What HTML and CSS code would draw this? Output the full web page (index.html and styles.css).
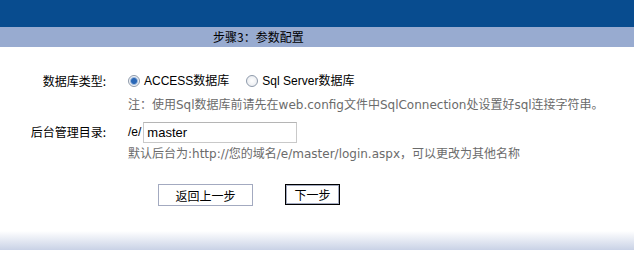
FILE: index.html
```html
<!DOCTYPE html>
<html lang="zh-CN">
<head>
    <meta charset="UTF-8">
    <title>安装向导 - 步骤3</title>
    <link rel="stylesheet" href="styles.css">
</head>
<body>
<div class="top"></div>
<div class="step">步骤3：参数配置</div>
<form class="setup" onsubmit="return false;">
    <div class="row">
        <div class="label">数据库类型:</div>
        <div class="field">
            <div class="choice">
                <label><input type="radio" name="dbtype" value="access" checked>ACCESS数据库</label>
                <label><input type="radio" name="dbtype" value="sql">Sql Server数据库</label>
            </div>
            <div class="note">注：使用Sql数据库前请先在web.config文件中SqlConnection处设置好sql连接字符串。</div>
        </div>
    </div>
    <div class="row">
        <div class="label label-mid">后台管理目录:</div>
        <div class="field">
            <div class="path">/e/<input type="text" name="admin_dir" value="master"></div>
            <div class="note">默认后台为:http://您的域名/e/master/login.aspx，可以更改为其他名称</div>
        </div>
    </div>
    <div class="actions">
        <button type="button" class="btn btn-back">返回上一步</button>
        <button type="submit" class="btn btn-next">下一步</button>
    </div>
</form>
<div class="bottom"></div>
</body>
</html>
```
FILE: styles.css
```css
body {
    margin: 0; background: #fff; color: #000;
    font-family: "DejaVu Sans", "Noto Sans CJK SC", sans-serif; font-size: 12px;
}
.top { height: 27px; background: #084c8f; }
.step {
    height: 20px; line-height: 20px; background: #98abd0; padding-left: 213px;
    font-family: "Noto Sans CJK SC", sans-serif; font-size: 12px;
}
.setup { padding-top: 24px; }
.row { display: grid; grid-template-columns: 106px 1fr; column-gap: 22px; margin-bottom: 8px; }
.label { text-align: right; line-height: 20px; font-family: "Noto Sans CJK SC", sans-serif; font-size: 12px; }
.label-mid { line-height: 22px; }
.choice {
    line-height: 20px; display: flex; gap: 17px;
    font-family: "Liberation Sans", "Noto Sans CJK SC", sans-serif; font-size: 12px;
}
.choice label { display: flex; align-items: center; }
input[type="radio"] {
    appearance: none; -webkit-appearance: none; width: 12px; height: 12px; margin: 0 4px 0 0;
    border-radius: 50%; border: 1px solid #8e9aab; box-sizing: border-box;
    background: radial-gradient(circle, #fff 0%, #e4e7ec 100%);
}
input[type="radio"]:checked {
    background: radial-gradient(circle, #2a67b6 0, #2a67b6 2.5px, #9db9dd 3.5px, #f2f4f7 4.5px);
}
.note { color: #6b6b6b; line-height: 16px; margin-top: 6px; }
.path {
    display: flex; align-items: center; height: 22px;
    font-family: "Liberation Sans", "Noto Sans CJK SC", sans-serif; font-size: 12px;
}
.path input {
    width: 154px; height: 21px; box-sizing: border-box; margin-left: 2px;
    border: 1px solid #c9c9c9; border-top-color: #b5b5b5; padding: 0 3px;
    font-family: "Liberation Sans", sans-serif; font-size: 13px; color: #000;
}
.row:nth-child(2) .note { margin-top: 3px; }
.actions { display: flex; gap: 32px; padding-left: 158px; margin-top: 22px; }
.btn {
    height: 22px; padding: 0; background: #fff; color: #000; cursor: pointer;
    font-family: "Noto Sans CJK SC", sans-serif; font-size: 12px;
}
.btn-back { width: 95px; border: 1px solid #a3aac0; }
.btn-next { width: 55px; height: 21px; border: 1px solid #000; box-shadow: inset 0 0 0 1px #a3aac0; }
.bottom { height: 19px; margin-top: 25px; background: linear-gradient(#fff, #c9d2e6); }
```
